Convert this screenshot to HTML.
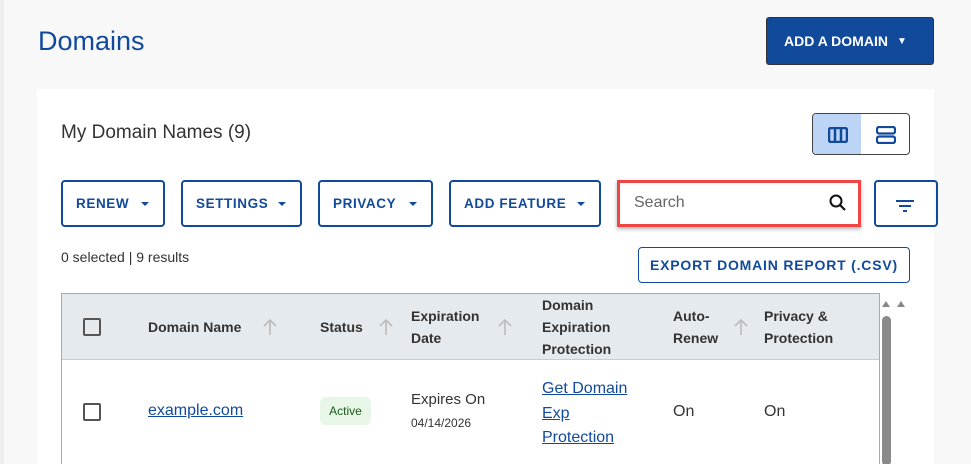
<!DOCTYPE html>
<html><head><style>
*{box-sizing:border-box;margin:0;padding:0}
html,body{width:971px;height:464px;overflow:hidden}
body{background:#f8f8f8;font-family:"Liberation Sans",sans-serif;position:relative;color:#333}
.a{position:absolute}
.card{left:37px;top:89px;width:897px;height:380px;background:#fff}
.btn{position:absolute;top:180px;height:47px;border:2px solid #124a9b;border-radius:4px;color:#124a9b;font-weight:bold;font-size:13.5px;letter-spacing:.6px;display:flex;align-items:center;padding-left:13px}
.btn i{position:absolute;right:14px;top:20px;width:0;height:0;border-left:4px solid transparent;border-right:4px solid transparent;border-top:4px solid #124a9b}
.th{font-weight:bold;font-size:14px;color:#333;line-height:22px}
.arr{position:absolute}
.cb{width:18px;height:18px;border:2px solid #555;border-radius:2px}
</style></head><body>
<div class="a" style="left:0;top:0;width:4px;height:464px;background:#eee"></div>
<div class="a" style="left:38px;top:26px;font-size:27px;color:#124a9b">Domains</div>
<div class="a" style="left:766px;top:17px;width:168px;height:48px;background:#124a9b;border-radius:3px;border:1px solid #333;color:#fff;font-weight:bold;font-size:14px;display:flex;align-items:center;padding-left:17px">ADD A DOMAIN<span style="margin-left:9px;font-size:10px">▼</span></div>
<div class="a card"></div>
<div class="a" style="left:61px;top:122px;font-size:19px;color:#333">My Domain Names (9)</div>
<div class="a" style="left:812px;top:113px;width:98px;height:42px;border:1px solid #444;border-radius:4px;overflow:hidden">
<div class="a" style="left:0;top:0;width:48px;height:40px;background:#bcd4f5"></div>
<svg class="a" style="left:15px;top:13px" width="20" height="16"><rect x="1" y="1" width="18" height="14" rx="2" fill="none" stroke="#124a9b" stroke-width="2.5"/><path d="M7 1v14M13 1v14" stroke="#124a9b" stroke-width="2.5"/></svg>
<svg class="a" style="left:63px;top:12px" width="20" height="18"><rect x="1" y="1" width="18" height="6.5" rx="2" fill="none" stroke="#124a9b" stroke-width="2.2"/><rect x="1" y="10.5" width="18" height="6.5" rx="2" fill="none" stroke="#124a9b" stroke-width="2.2"/></svg>
</div>
<div class="btn" style="left:61px;width:104px">RENEW<i></i></div>
<div class="btn" style="left:181px;width:121px">SETTINGS<i></i></div>
<div class="btn" style="left:318px;width:115px">PRIVACY<i></i></div>
<div class="btn" style="left:449px;width:152px">ADD FEATURE<i></i></div>
<div class="a" style="left:617px;top:180px;width:244px;height:47px;border:3px solid #f04545;box-shadow:0 2px 4px rgba(0,0,0,.3);background:#fff"></div>
<div class="a" style="left:634px;top:194px;font-size:16px;color:#666">Search</div>
<svg class="a" style="left:828px;top:193px" width="20" height="20"><circle cx="8" cy="8" r="5.5" fill="none" stroke="#111" stroke-width="2"/><path d="M12 12l5 5" stroke="#111" stroke-width="2.2"/></svg>
<div class="a" style="left:874px;top:180px;width:64px;height:47px;border:2px solid #124a9b;border-radius:4px"></div>
<svg class="a" style="left:895px;top:199px" width="20" height="14"><path d="M1 2h18M4 7h12M8 12h4" stroke="#124a9b" stroke-width="2"/></svg>
<div class="a" style="left:61px;top:249px;font-size:14px;color:#333">0 selected | 9 results</div>
<div class="a" style="left:638px;top:247px;width:272px;height:36px;border:1px solid #124a9b;border-radius:4px;color:#124a9b;font-weight:bold;font-size:14px;letter-spacing:.8px;display:flex;align-items:center;justify-content:center">EXPORT DOMAIN REPORT (.CSV)</div>
<div class="a" style="left:61px;top:293px;width:819px;height:180px;border:1px solid #aaa;border-bottom:none"></div>
<div class="a" style="left:62px;top:294px;width:817px;height:66px;background:#e4eaee;border-bottom:1px solid #ccc"></div>
<div class="a cb" style="left:83px;top:318px"></div>
<div class="a th" style="left:148px;top:316px">Domain Name</div>
<div class="a th" style="left:320px;top:316px">Status</div>
<div class="a th" style="left:411px;top:305px">Expiration<br>Date</div>
<div class="a th" style="left:542px;top:294px">Domain<br>Expiration<br>Protection</div>
<div class="a th" style="left:673px;top:305px">Auto-<br>Renew</div>
<div class="a th" style="left:764px;top:305px">Privacy &amp;<br>Protection</div>
<svg class="arr" style="left:262px;top:318px" width="16" height="18"><path d="M8 17V2M2 8l6-6 6 6" fill="none" stroke="#bbb" stroke-width="1.6"/></svg>
<svg class="arr" style="left:378px;top:318px" width="16" height="18"><path d="M8 17V2M2 8l6-6 6 6" fill="none" stroke="#bbb" stroke-width="1.6"/></svg>
<svg class="arr" style="left:497px;top:318px" width="16" height="18"><path d="M8 17V2M2 8l6-6 6 6" fill="none" stroke="#bbb" stroke-width="1.6"/></svg>
<svg class="arr" style="left:733px;top:318px" width="16" height="18"><path d="M8 17V2M2 8l6-6 6 6" fill="none" stroke="#bbb" stroke-width="1.6"/></svg>
<div class="a cb" style="left:83px;top:403px"></div>
<div class="a" style="left:148px;top:402px;font-size:16px;color:#124a9b;text-decoration:underline">example.com</div>
<div class="a" style="left:320px;top:397px;width:51px;height:28px;background:#e8f6e8;border-radius:6px;font-size:12px;color:#1a5a1a;text-align:center;line-height:28px">Active</div>
<div class="a" style="left:411px;top:391px;font-size:15px">Expires On</div>
<div class="a" style="left:411px;top:416px;font-size:12px">04/14/2026</div>
<div class="a" style="left:542px;top:377px;font-size:16px;line-height:24.5px;color:#124a9b;text-decoration:underline">Get Domain<br>Exp<br>Protection</div>
<div class="a" style="left:673px;top:403px;font-size:16px">On</div>
<div class="a" style="left:764px;top:403px;font-size:16px">On</div>
<svg class="a" style="left:881px;top:300px" width="26" height="8"><path d="M1 7l4-6 4 6zM16 7l4-6 4 6z" fill="#888"/></svg>
<div class="a" style="left:882px;top:316px;width:9px;height:150px;background:#8a8a8a;border-radius:5px"></div>
</body></html>
